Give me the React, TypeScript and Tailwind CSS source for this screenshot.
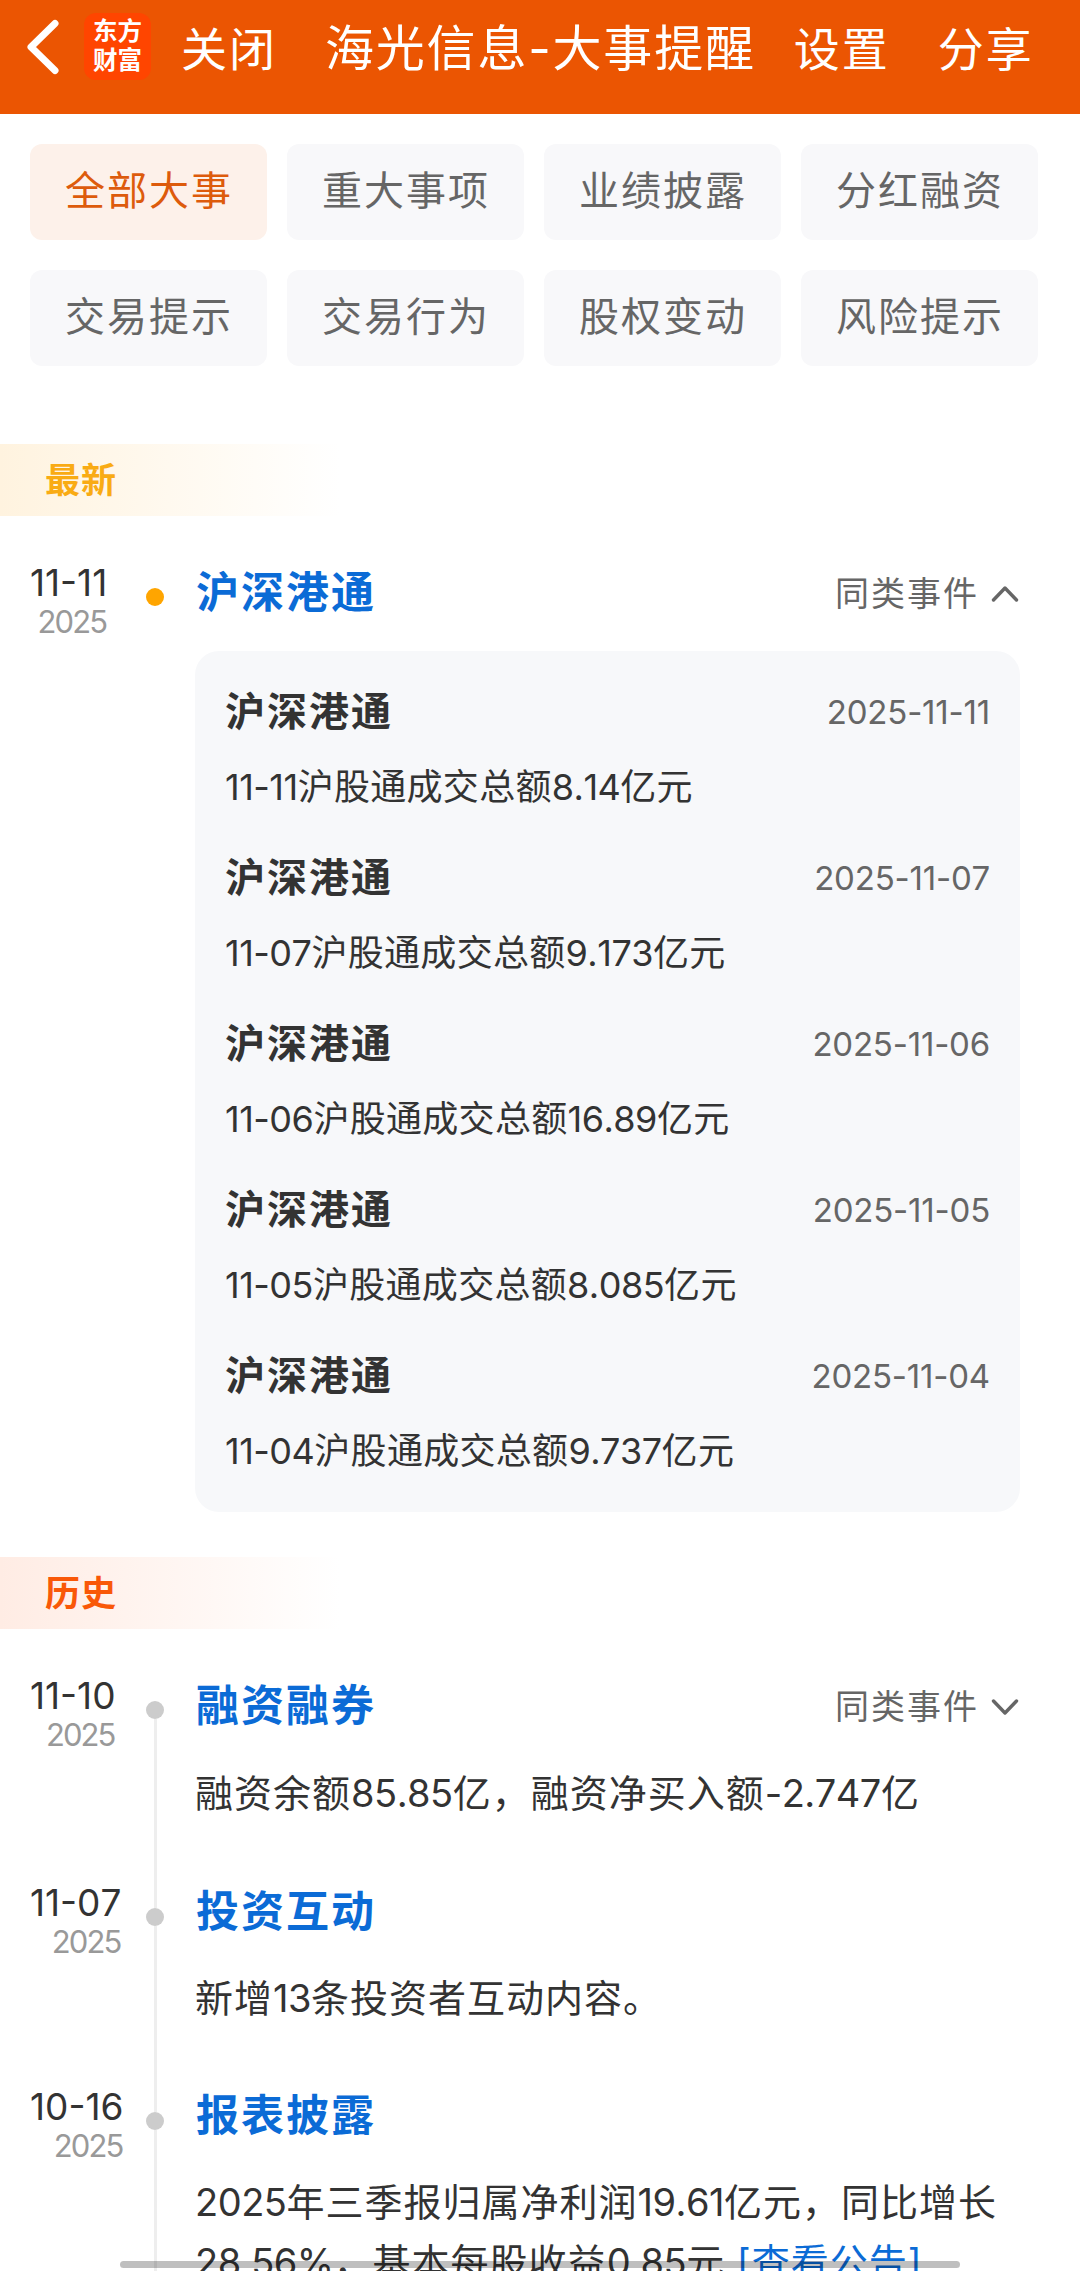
import { Fragment } from "react";
import { clsx } from "clsx";

const FONT = "font-['Inter','Noto_Sans_CJK_SC',sans-serif] [font-kerning:none]";

const TABS = [
  "全部大事",
  "重大事项",
  "业绩披露",
  "分红融资",
  "交易提示",
  "交易行为",
  "股权变动",
  "风险提示",
];

const SIMILAR_EVENTS = [
  { date: "2025-11-11", text: "11-11沪股通成交总额8.14亿元" },
  { date: "2025-11-07", text: "11-07沪股通成交总额9.173亿元" },
  { date: "2025-11-06", text: "11-06沪股通成交总额16.89亿元" },
  { date: "2025-11-05", text: "11-05沪股通成交总额8.085亿元" },
  { date: "2025-11-04", text: "11-04沪股通成交总额9.737亿元" },
];

function Header() {
  return (
    <header className="flex h-[114px] items-start bg-[#eb5502] text-white">
      <svg
        className="mt-[17px] ml-6 h-[60px] w-[38px] shrink-0"
        viewBox="0 0 38 60"
        fill="none"
        stroke="currentColor"
        strokeWidth="7"
        strokeLinecap="round"
        strokeLinejoin="round"
      >
        <path d="M31 6.5 7 30 31 53.5" />
      </svg>
      <div className="mt-[13px] ml-[22px] flex h-[67px] w-[67px] shrink-0 flex-col items-center justify-center rounded-xl bg-[#ff4500] pb-0.5 text-[24.5px] leading-[29px] font-bold">
        <span>东方</span>
        <span>财富</span>
      </div>
      <button className="mt-[19px] ml-[30px] h-[60px] text-[46px] leading-[60px] tracking-[2px] whitespace-nowrap">
        关闭
      </button>
      <h1 className="mt-[19px] ml-[48px] h-[60px] text-[49px] leading-[60px] tracking-[1.8px] whitespace-nowrap">
        海光信息-大事提醒
      </h1>
      <button className="mt-[19px] ml-[38px] h-[60px] text-[46px] leading-[60px] tracking-[2px] whitespace-nowrap">
        设置
      </button>
      <button className="mt-[19px] ml-[48px] h-[60px] text-[46px] leading-[60px] tracking-[2px] whitespace-nowrap">
        分享
      </button>
    </header>
  );
}

function Tabs() {
  return (
    <nav className="mt-[30px] grid grid-cols-[repeat(4,237px)] gap-x-5 gap-y-[30px] pl-[30px]">
      {TABS.map((tab, i) => (
        <button
          key={tab}
          className={clsx(
            "h-24 rounded-xl pb-0.5 pl-px text-[40px] tracking-[2px]",
            i === 0 ? "bg-[#fdf1ea] text-[#dd5b0c]" : "bg-[#f8f8fa] text-[#666]"
          )}
        >
          {tab}
        </button>
      ))}
    </nav>
  );
}

function Toggle({ open }: { open?: boolean }) {
  return (
    <button className="flex h-[60px] items-center text-[34px] leading-[60px] tracking-[2px] text-[#666]">
      <span className="pt-[3px]">同类事件</span>
      <svg
        className="mt-1 ml-[11px] h-5 w-[30px]"
        viewBox="0 0 30 20"
        fill="none"
        stroke="currentColor"
        strokeWidth="3.4"
        strokeLinecap="round"
        strokeLinejoin="round"
      >
        <path d={open ? "M3.5 16 15 4 26.5 16" : "M3.5 4 15 16 26.5 4"} />
      </svg>
    </button>
  );
}

// Digits are set tighter than the Chinese text around them
function Mixed({ text }: { text: string }) {
  return text.split(/([\d.%-]+)/).map((part, i) =>
    i % 2 ? (
      <span key={i} className="tracking-[-0.5px]">
        {part}
      </span>
    ) : (
      <Fragment key={i}>{part}</Fragment>
    )
  );
}

function DateLabel({ date }: { date: string }) {
  return (
    <div className="ml-[30px] w-fit pt-px text-right whitespace-nowrap">
      <div className="text-[37px] leading-10 text-[#333]">{date}</div>
      <div className="pr-px text-[31px] leading-[38px] tracking-[-1.9px] text-[#999]">
        2025
      </div>
    </div>
  );
}

function HistoryItem({
  date,
  title,
  toggle,
  className,
  children,
}: {
  date: string;
  title: string;
  toggle?: boolean;
  className: string;
  children: React.ReactNode;
}) {
  return (
    <div className={clsx("flex", className)}>
      <div className="w-[146px] shrink-0">
        <DateLabel date={date} />
      </div>
      <div className="flex w-[18px] shrink-0 flex-col items-center">
        <div className="h-[26px] w-[3px] bg-[#eee] group-first:bg-transparent" />
        <div className="size-[18px] shrink-0 rounded-full bg-[#ccc]" />
        <div className="w-[3px] grow bg-[#eee]" />
      </div>
      <div className="ml-8 w-[824px]">
        <div className="flex items-center justify-between">
          <h3
            className={clsx(
              "text-[43px] font-bold tracking-[2px] text-[#0b6bd6]",
              toggle ? "h-[60px] leading-[60px]" : "h-[58px] leading-[58px]"
            )}
          >
            {title}
          </h3>
          {toggle && <Toggle />}
        </div>
        <p className="mt-7 -ml-px text-[38px] leading-[60px] tracking-[1px] text-[#333]">
          {children}
        </p>
      </div>
    </div>
  );
}

export default function App() {
  return (
    <div
      className={clsx(
        "relative h-[2271px] w-[1080px] overflow-hidden bg-white",
        FONT
      )}
    >
      <Header />
      <Tabs />

      {/* Latest */}
      <h2 className="mt-[78px] h-[72px] w-[340px] bg-linear-to-r from-[#fff3df] to-white pl-[45px] text-[35px] leading-[72px] font-bold tracking-[1px] text-[#f9ab14]">
        最新
      </h2>
      <section className="mt-[46px] flex">
        <div className="w-[146px] shrink-0">
          <DateLabel date="11-11" />
        </div>
        <div className="mt-[26px] size-[18px] shrink-0 rounded-full bg-[#ffa500]" />
        <div className="ml-[31px] w-[825px]">
          <div className="flex items-center justify-between">
            <h3 className="h-[60px] pl-px text-[43px] leading-[60px] font-bold tracking-[2px] text-[#0b6bd6]">
              沪深港通
            </h3>
            <Toggle open />
          </div>
          <div className="mt-[29px] flex h-[861px] flex-col gap-[30px] rounded-3xl bg-[#f7f8fa] px-[30px] pt-[31px]">
            {SIMILAR_EVENTS.map((event) => (
              <div key={event.date} className="h-[136px]">
                <div className="flex items-center justify-between leading-[60px]">
                  <h4 className="text-[40px] font-bold tracking-[2px] text-[#333]">
                    沪深港通
                  </h4>
                  <time className="text-[33px] tracking-[-0.2px] text-[#666]">
                    {event.date}
                  </time>
                </div>
                <p className="mt-[15px] text-[36px] leading-[60px] tracking-[0.3px] text-[#333]">
                  <Mixed text={event.text} />
                </p>
              </div>
            ))}
          </div>
        </div>
      </section>

      {/* History */}
      <h2 className="mt-[45px] h-[72px] w-[340px] bg-linear-to-r from-[#ffece4] to-white pl-[45px] text-[35px] leading-[72px] font-bold tracking-[1px] text-[#f95808]">
        历史
      </h2>
      <section className="mt-[46px]">
        <HistoryItem
          date="11-10"
          title="融资融券"
          toggle
          className="group h-[207px]"
        >
          <Mixed text="融资余额85.85亿，融资净买入额-2.747亿" />
        </HistoryItem>
        <HistoryItem date="11-07" title="投资互动" className="h-[204px]">
          <Mixed text="新增13条投资者互动内容。" />
        </HistoryItem>
        <HistoryItem date="10-16" title="报表披露" className="h-[204px]">
          <Mixed text="2025年三季报归属净利润19.61亿元，同比增长28.56%，基本每股收益0.85元" />{" "}
          <a className="text-[#0b6bd6]">[查看公告]</a>
        </HistoryItem>
      </section>

      {/* System gesture bar */}
      <div className="absolute bottom-[3px] left-[120px] h-[7px] w-[840px] rounded-full bg-black/25" />
    </div>
  );
}
